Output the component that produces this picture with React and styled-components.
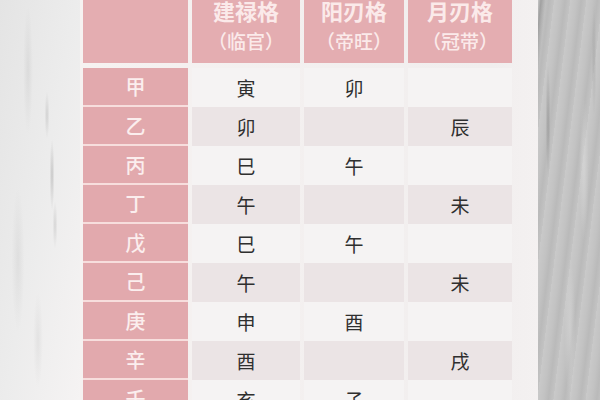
import React from "react";
import styled, { createGlobalStyle } from "styled-components";

const GlobalStyle = createGlobalStyle`
  html, body {
    margin: 0;
    padding: 0;
    width: 600px;
    height: 400px;
    overflow: hidden;
    background: #efeded;
    font-family: "Noto Sans CJK SC", "Noto Sans", sans-serif;
  }
`;

const header = [
  { title: "建禄格", sub: "（临官）" },
  { title: "阳刃格", sub: "（帝旺）" },
  { title: "月刃格", sub: "（冠带）" },
];

const rows = [
  ["甲", "寅", "卯", ""],
  ["乙", "卯", "", "辰"],
  ["丙", "巳", "午", ""],
  ["丁", "午", "", "未"],
  ["戊", "巳", "午", ""],
  ["己", "午", "", "未"],
  ["庚", "申", "酉", ""],
  ["辛", "酉", "", "戌"],
  ["壬", "亥", "子", ""],
];

const App = () => {
  return (
    <Page>
      <GlobalStyle />
      <LeftMarble />
      <Panel>
        <HeaderRow>
          <HeadCell />
          {header.map((h) => (
            <HeadCell key={h.title}>
              <HeadTitle>{h.title}</HeadTitle>
              <HeadSub>{h.sub}</HeadSub>
            </HeadCell>
          ))}
        </HeaderRow>
        <Body>
          {rows.map((r, i) => (
            <Row key={r[0]}>
              <StemCell>{r[0]}</StemCell>
              {r.slice(1).map((v, j) => (
                <Cell key={j} $shade={i % 2 === 1}>
                  {v}
                </Cell>
              ))}
            </Row>
          ))}
        </Body>
      </Panel>
      <RightMarble />
    </Page>
  );
};

const Page = styled.div`
  display: flex;
  width: 600px;
  height: 400px;
  overflow: hidden;
`;

const LeftMarble = styled.div`
  width: 80px;
  flex-shrink: 0;
  background:
    radial-gradient(ellipse 3px 45px at 52px 175px, rgba(130, 130, 130, 0.35), transparent 80%),
    radial-gradient(ellipse 3px 30px at 47px 115px, rgba(150, 150, 150, 0.3), transparent 80%),
    radial-gradient(ellipse 3px 30px at 55px 225px, rgba(140, 140, 140, 0.25), transparent 80%),
    radial-gradient(ellipse 6px 80px at 28px 70px, rgba(195, 195, 195, 0.35), transparent 80%),
    radial-gradient(ellipse 8px 90px at 18px 260px, rgba(200, 200, 200, 0.35), transparent 80%),
    radial-gradient(ellipse 6px 60px at 38px 340px, rgba(200, 200, 200, 0.3), transparent 80%),
    linear-gradient(100deg, #e4e4e4 0%, #ececec 50%, #f5f3f3 100%);
`;

const RightMarble = styled.div`
  width: 62px;
  flex-shrink: 0;
  background:
    linear-gradient(96deg, transparent 0px, rgba(105, 105, 105, 0.4) 3px, transparent 8px),
    radial-gradient(ellipse 3px 70px at 10px 120px, rgba(95, 95, 95, 0.3), transparent 80%),
    radial-gradient(ellipse 6px 90px at 46px 170px, rgba(225, 225, 225, 0.45), transparent 80%),
    radial-gradient(ellipse 7px 90px at 32px 330px, rgba(222, 222, 222, 0.45), transparent 80%),
    radial-gradient(ellipse 3px 70px at 56px 60px, rgba(140, 140, 140, 0.3), transparent 80%),
    repeating-linear-gradient(97deg, rgba(255, 255, 255, 0.1) 0px, rgba(255, 255, 255, 0) 6px, rgba(120, 120, 120, 0.12) 11px, rgba(255, 255, 255, 0) 16px),
    #c3c3c3;
`;

const Panel = styled.div`
  width: 458px;
  flex-shrink: 0;
  padding-left: 3px;
  box-sizing: border-box;
  background: linear-gradient(90deg, #f6f2f1 0%, #f1eeee 90%, #f4f1f1 100%);
  display: flex;
  flex-direction: column;
  gap: 5px;
`;

const HeaderRow = styled.div`
  display: grid;
  grid-template-columns: 105px 108px 100px 104px;
  column-gap: 4px;
  height: 63px;
`;

const HeadCell = styled.div`
  background: #e4adb1;
  display: flex;
  flex-direction: column;
  align-items: center;
  justify-content: flex-end;
  padding-bottom: 10px;
  color: #fbeaea;
  overflow: hidden;
`;

const HeadTitle = styled.div`
  font-size: 22px;
  font-weight: 700;
  line-height: 38px;
  white-space: nowrap;
`;

const HeadSub = styled.div`
  font-size: 19px;
  font-weight: 500;
  line-height: 24px;
  white-space: nowrap;
`;

const Body = styled.div`
  display: flex;
  flex-direction: column;
`;

const Row = styled.div`
  display: grid;
  grid-template-columns: 105px 108px 100px 104px;
  column-gap: 4px;
  height: 39px;
  flex-shrink: 0;
`;

const StemCell = styled.div`
  background: #e2a9ad;
  border-bottom: 2px solid #f7dedd;
  display: flex;
  align-items: center;
  justify-content: center;
  color: #fbeeee;
  font-size: 20px;
  font-weight: 500;
`;

const Cell = styled.div`
  background: ${(p) => (p.$shade ? "#ebe4e5" : "#f5f3f3")};
  display: flex;
  align-items: center;
  justify-content: center;
  color: #2f2f2f;
  font-size: 19px;
`;

export default App;
